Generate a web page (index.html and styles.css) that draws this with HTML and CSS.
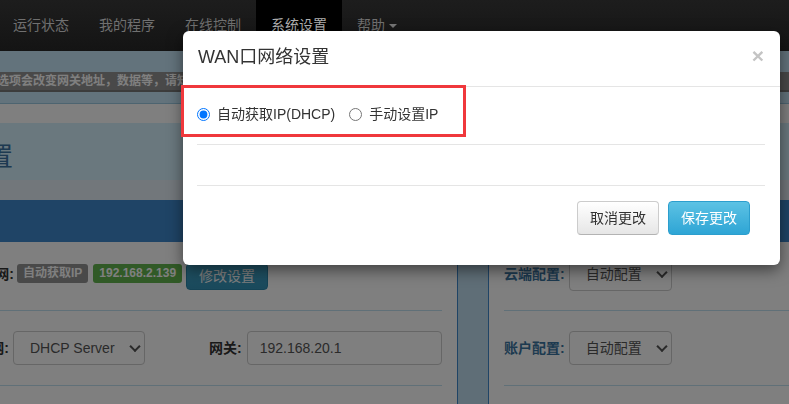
FILE: index.html
```html
<!DOCTYPE html>
<html lang="zh-CN">
<head>
    <meta charset="UTF-8">
    <meta name="viewport" content="width=device-width, initial-scale=1.0">
    <title>系统设置</title>
    <link rel="stylesheet" href="styles.css">
</head>
<body>

    <nav class="navbar">
        <ul class="nav">
            <li><a href="#">运行状态</a></li>
            <li><a href="#">我的程序</a></li>
            <li><a href="#">在线控制</a></li>
            <li class="active"><a href="#">系统设置</a></li>
            <li><a href="#">帮助 <span class="caret"></span></a></li>
        </ul>
    </nav>

    <div class="subbar">
        <div class="notice"><span>注意：修改此选项会改变网关地址，数据等，请知悉后再保存设置。</span></div>
    </div>

    <div class="page-title">
        <h2>系统设置</h2>
    </div>
    <div class="strip"></div>
    <div class="panel-heading"></div>

    <div class="panel-body">
        <div class="col col-left">
            <div class="form-row first">
                <label class="lbl lbl-wan">WAN口网:</label>
                <span class="badge badge-gray">自动获取IP</span>
                <span class="badge badge-green">192.168.2.139</span>
                <button class="btn btn-info btn-sm">修改设置</button>
            </div>
            <div class="form-row">
                <label class="lbl lbl-lan">LAN口网:</label>
                <div class="select select-mode">
                    <select>
                        <option>DHCP Server</option>
                        <option>静态地址</option>
                    </select>
                </div>
                <label class="lbl lbl-gw">网关:</label>
                <input class="input input-gw" type="text" value="192.168.20.1">
            </div>
        </div>

        <div class="gutter"></div>

        <div class="col col-right">
            <div class="form-row first">
                <label class="lbl lbl-blue">云端配置:</label>
                <div class="select select-auto">
                    <select><option>自动配置</option></select>
                </div>
            </div>
            <div class="form-row">
                <label class="lbl lbl-blue">账户配置:</label>
                <div class="select select-auto">
                    <select><option>自动配置</option></select>
                </div>
            </div>
        </div>
    </div>

    <div class="backdrop"></div>

    <div class="modal">
        <div class="modal-header">
            <h3>WAN口网络设置</h3>
            <button class="close">&times;</button>
        </div>
        <div class="modal-body">
            <div class="radio-row">
                <label class="radio"><input type="radio" name="wan" checked>自动获取IP(DHCP)</label>
                <label class="radio"><input type="radio" name="wan">手动设置IP</label>
            </div>
            <div class="manual-fields"></div>
            <div class="modal-footer">
                <button class="btn">取消更改</button>
                <button class="btn btn-info">保存更改</button>
            </div>
        </div>
        <div class="highlight"></div>
    </div>

</body>
</html>
```

FILE: styles.css
```css
* {
    box-sizing: border-box;
}

body {
    margin: 0;
    font-family: "Liberation Sans", "Noto Sans CJK SC", sans-serif;
    font-size: 14px;
    color: #333;
    background: #fff;
    overflow: hidden;
}

/* top navigation */
.navbar {
    position: relative;
    z-index: 20;
    height: 51px;
    background: linear-gradient(#1d1d1d, #141414);
}

.nav {
    list-style: none;
    margin: 0 0 0 -2px;
    padding: 0;
    display: flex;
}

.nav a {
    display: block;
    padding: 15px 15px 16px;
    line-height: 20px;
    color: #707070;
    text-decoration: none;
}

.nav .active a {
    background: #000;
    color: #b0b0b0;
}

.caret {
    display: inline-block;
    width: 0;
    height: 0;
    border-top: 4px solid #777;
    border-left: 4px solid transparent;
    border-right: 4px solid transparent;
    vertical-align: middle;
}

/* page under the backdrop */
.subbar {
    background: #c6e6f8;
    padding: 21px 0 11px;
    border-bottom: 1px solid #9ac8e0;
    margin-bottom: 19px;
}

.notice {
    background: #929292;
    border-bottom: 2px solid #787878;
    color: #fff;
    font-weight: bold;
    font-size: 12px;
    line-height: 18px;
    white-space: nowrap;
    overflow: hidden;
    text-indent: -75px;
}

.page-title {
    height: 57px;
    background: #d4f0fc;
}

.page-title h2 {
    margin: 0 0 0 -91px;
    padding-top: 16px;
    font-size: 26px;
    line-height: 36px;
    font-weight: normal;
    color: #3c74a4;
}

.strip {
    height: 20px;
    background: #e4eef6;
}

.panel-heading {
    height: 42px;
    background: #3e88cc;
}

.panel-body {
    display: flex;
    margin-left: -200px;
    height: 170px;
}

.col-left {
    width: 658px;
    padding-right: 15px;
    border-right: 1px solid #3e88cc;
}

.gutter {
    width: 30px;
    background: #bedcee;
}

.col-right {
    flex: 1;
    padding-left: 15px;
    border-left: 1px solid #3e88cc;
}

.form-row {
    display: flex;
    align-items: center;
    height: 75px;
    padding: 20px 0;
    border-bottom: 1px solid #c0e0f0;
}

.form-row.first {
    height: 69px;
    padding-top: 15px;
}

.lbl {
    font-weight: bold;
    line-height: 20px;
    white-space: nowrap;
}

.lbl-wan {
    width: 214px;
    margin-right: 3px;
    text-align: right;
}

.lbl-lan {
    width: 209px;
    margin-right: 4px;
    text-align: right;
}

.lbl-gw {
    margin-left: 64px;
    margin-right: 5px;
}

.lbl-blue {
    color: #3a74a0;
    margin-right: 4px;
}

.badge {
    display: inline-block;
    padding: 3px 6px;
    font-size: 12px;
    line-height: 13px;
    font-weight: bold;
    color: #fff;
    border-radius: 3px;
}

.badge-gray {
    background: #929292;
    margin-right: 5px;
}

.badge-green {
    background: #62b44e;
    margin-right: 4px;
}

.select {
    position: relative;
}

.select select {
    appearance: none;
    -webkit-appearance: none;
    width: 100%;
    height: 34px;
    padding: 6px 12px 6px 16px;
    border: 1px solid #ccc;
    border-radius: 4px;
    background: #fff;
    color: #555;
    font: inherit;
}

.select::after {
    content: '';
    position: absolute;
    right: 6px;
    top: 50%;
    width: 6px;
    height: 6px;
    border-right: 2px solid #555;
    border-bottom: 2px solid #555;
    transform: translateY(-70%) rotate(45deg);
}

.select-mode {
    width: 132px;
}

.select-auto {
    width: 103px;
}

.input {
    height: 34px;
    padding: 6px 12px;
    border: 1px solid #ccc;
    border-radius: 4px;
    color: #555;
    font: inherit;
}

.input-gw {
    width: 195px;
}

.btn {
    display: inline-block;
    padding: 6px 12px;
    font: inherit;
    line-height: 20px;
    color: #333;
    border: 1px solid #ccc;
    border-bottom-color: #b3b3b3;
    border-radius: 4px;
    background: linear-gradient(#fff, #e6e6e6);
    cursor: pointer;
}

.btn-info {
    color: #fff;
    border-color: #2c9ecd;
    background: linear-gradient(#5cc2e4, #2ea5d5);
}

.btn-sm {
    align-self: flex-end;
    height: 27px;
    padding: 0 12px;
    line-height: 25px;
    border-color: #2a86ab;
    background: linear-gradient(#42a8cc, #3593b8);
}

.backdrop {
    position: fixed;
    inset: 0;
    z-index: 10;
    background: rgba(0, 0, 0, 0.5);
}

/* dialog */
.modal {
    position: fixed;
    top: 31px;
    left: 183px;
    width: 597px;
    z-index: 30;
    background: #fff;
    border-radius: 6px;
    box-shadow: 0 5px 15px rgba(0, 0, 0, 0.5);
}

.modal-header {
    display: flex;
    justify-content: space-between;
    align-items: center;
    padding: 14px 16px 16px 15px;
    border-bottom: 1px solid #e5e5e5;
}

.modal-header h3 {
    margin: 0;
    font-size: 18px;
    line-height: 25px;
    font-weight: normal;
    color: #333;
}

.close {
    padding: 0;
    border: 0;
    background: none;
    font: bold 21px/20px "Liberation Sans", sans-serif;
    color: #c4c4c4;
    margin-top: -4px;
}

.modal-body {
    padding: 15px 15px 15px 14px;
}

.radio-row {
    display: flex;
    align-items: center;
    height: 43px;
    padding-bottom: 18px;
    border-bottom: 1px solid #e5e5e5;
}

.radio {
    display: flex;
    align-items: center;
    line-height: 24px;
    margin-right: 14px;
}

.radio input {
    width: 13px;
    height: 13px;
    margin: 0 7px 0 0;
}

.manual-fields {
    height: 41px;
    border-bottom: 1px solid #e5e5e5;
}

.modal-footer {
    display: flex;
    justify-content: flex-end;
    gap: 9px;
    padding: 15px;
}

.highlight {
    position: absolute;
    left: -2px;
    top: 54px;
    width: 285px;
    height: 52px;
    border: 3px solid #f0383c;
}
```
